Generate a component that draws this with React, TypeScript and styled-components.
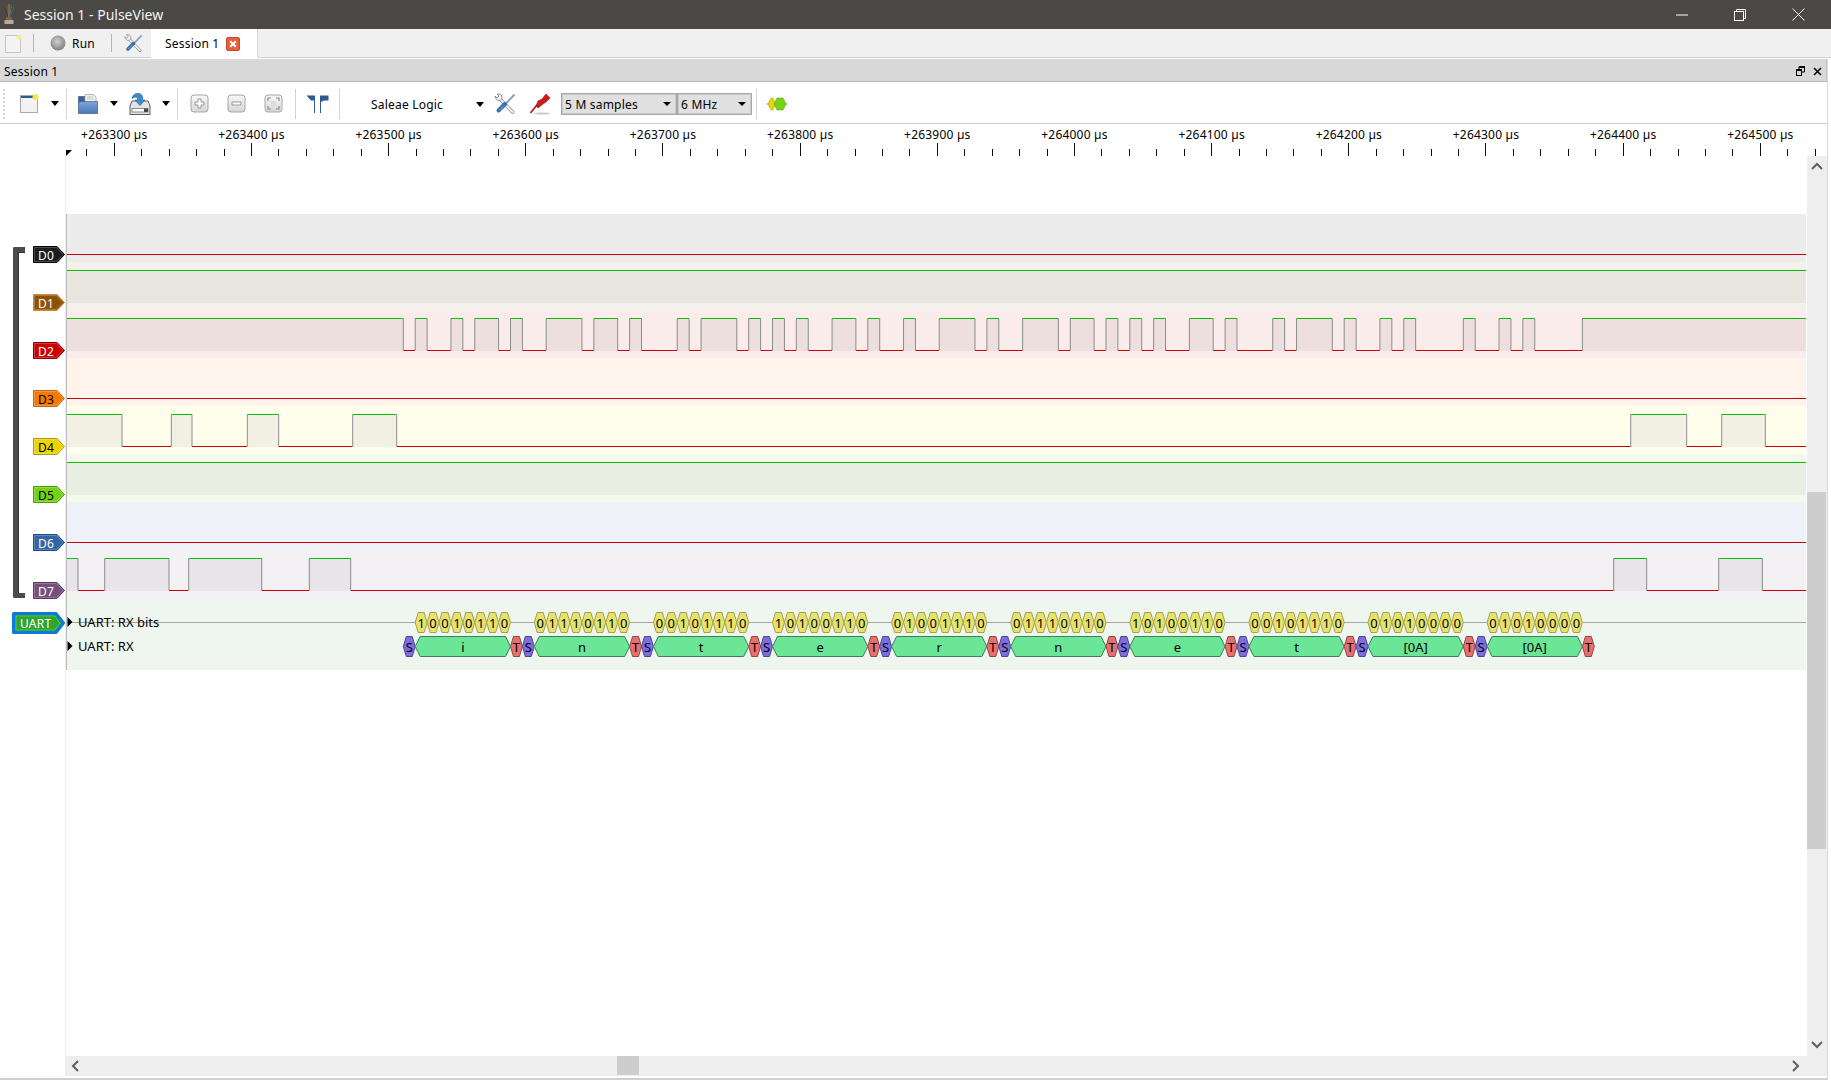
// App.tsx - PulseView session window

import styled, { createGlobalStyle } from "styled-components";

const GlobalStyle = createGlobalStyle`
  html, body {
    margin: 0;
    padding: 0;
    background: #ffffff;
    overflow: hidden;
  }
  body {
    font-family: "Noto Sans", "Liberation Sans", sans-serif;
    font-size: 12px;
    letter-spacing: 0.2px;
    color: #000000;
  }
`;

const Window = styled.div`
  width: 1831px;
  height: 1080px;
  display: flex;
  flex-direction: column;
`;

const TitleBar = styled.header`
  height: 29px;
  flex: none;
  display: flex;
  align-items: center;
  background: #4a4946;
  color: #f2f2f2;
  font-size: 14px;
  letter-spacing: 0;
  padding-left: 3px;
`;

const TitleText = styled.span`
  margin-left: 9px;
  flex: 1;
`;

const WinButton = styled.div`
  width: 58px;
  height: 29px;
  display: flex;
  align-items: center;
  justify-content: center;
`;

const WinControls = styled.div`
  display: flex;
  margin-right: 4px;
`;

const TabBar = styled.nav`
  height: 29px;
  flex: none;
  display: flex;
  align-items: center;
  background: #f0f0f0;
  border-bottom: 1px solid #d2d2d2;
  box-sizing: border-box;
`;

const TabIcon = styled.div<{ $w: number; $pl?: number; $pr?: number }>`
  width: ${(p) => p.$w}px;
  height: 100%;
  flex: none;
  box-sizing: border-box;
  padding: 0 ${(p) => p.$pr ?? 0}px 0 ${(p) => p.$pl ?? 0}px;
  display: flex;
  align-items: center;
  justify-content: center;
`;

const TabSep = styled.div`
  width: 1px;
  height: 18px;
  background: #b4b4b4;
  flex: none;
`;

const RunButton = styled.div`
  width: 77px;
  flex: none;
  display: flex;
  align-items: center;
  gap: 6px;
  padding-left: 16px;
  box-sizing: border-box;
`;

const Tab = styled.div`
  width: 107px;
  height: 29px;
  flex: none;
  margin-left: 1px;
  display: flex;
  align-items: center;
  gap: 7px;
  padding: 2px 0 0 14px;
  box-sizing: border-box;
  background: #ffffff;
  border-right: 1px solid #d8d8d8;
  border-bottom: 1px solid #ffffff;
`;

const Dock = styled.div`
  flex: 1;
  min-height: 0;
  display: flex;
  flex-direction: column;
  margin-top: 1px;
  margin-right: 3px;
  border-right: 1px solid #d8d8d8;
  border-bottom: 2px solid #d0d0d0;
`;

const DockTitle = styled.div`
  height: 23px;
  flex: none;
  box-sizing: border-box;
  display: flex;
  align-items: center;
  padding: 2px 0 0 4px;
  background: #d8d8d8;
  border-bottom: 1px solid #b8b8b8;
  border-right: 1px solid #c4c4c4;
`;

const DockLabel = styled.span`
  flex: 1;
`;

const DockControls = styled.div`
  display: flex;
  align-items: center;
  gap: 8px;
  margin-right: 4px;
`;

const Toolbar = styled.div`
  height: 42px;
  flex: none;
  box-sizing: border-box;
  display: flex;
  align-items: center;
  padding: 2px 0 0 3px;
  background: #ffffff;
  border-bottom: 1px solid #c8c8c8;
`;

const Grip = styled.div`
  width: 7px;
  height: 30px;
  flex: none;
  box-sizing: border-box;
  border-left: 2px dotted #cfcfcf;
`;

const ToolButton = styled.div<{ $w: number }>`
  width: ${(p) => p.$w}px;
  height: 30px;
  flex: none;
  display: flex;
  align-items: center;
  justify-content: center;
`;

const ToolSep = styled.div<{ $ml: number }>`
  width: 1px;
  height: 30px;
  flex: none;
  margin-left: ${(p) => p.$ml}px;
  background: #d4d4d4;
`;

const Arrow = styled.div`
  width: 0;
  height: 0;
  flex: none;
  border-left: 4.5px solid transparent;
  border-right: 4.5px solid transparent;
  border-top: 5px solid #000000;
`;

const DeviceSelect = styled.div`
  width: 146px;
  height: 30px;
  flex: none;
  box-sizing: border-box;
  display: flex;
  align-items: center;
  justify-content: space-between;
  padding: 2px 2px 0 31px;
`;

const ComboGroup = styled.div`
  display: flex;
  margin-left: 3px;
  flex: none;
`;

const Combo = styled.div<{ $w: number }>`
  width: ${(p) => p.$w}px;
  height: 22px;
  box-sizing: border-box;
  display: flex;
  align-items: center;
  justify-content: space-between;
  padding: 2px 5px 0 3px;
  background: #e0e0e0;
  border: 1px solid #a8a8a8;
  box-shadow: inset 0 0 0 1px #c8c8c8;
`;

const ComboArrow = styled(Arrow)`
  border-left-width: 4px;
  border-right-width: 4px;
  border-top-width: 4px;
  margin-top: -2px;
`;

const View = styled.div`
  flex: 1;
  min-height: 0;
  display: flex;
  flex-direction: column;
`;

const RulerBar = styled.div`
  height: 32px;
  flex: none;
  padding-left: 66px;
  background: #ffffff;

  svg {
    display: block;
  }
`;

const RulerLabel = styled.text`
  font-family: "Noto Sans", "Liberation Sans", sans-serif;
  font-size: 12px;
  letter-spacing: 0.2px;
  text-anchor: middle;
`;

const RowLabel = styled.text`
  font-family: "Noto Sans", "Liberation Sans", sans-serif;
  font-size: 13px;
  letter-spacing: 0;
`;

const AnnoLabel = styled.text`
  font-family: "Noto Sans", "Liberation Sans", sans-serif;
  font-size: 13px;
  letter-spacing: 0;
  text-anchor: middle;
`;

const Middle = styled.div`
  height: 900px;
  flex: none;
  display: flex;
`;

const Main = styled.div`
  flex: 1;
  margin-right: 1px;
  padding-top: 58px;
  box-sizing: border-box;
  background: linear-gradient(
    to right,
    transparent 65px,
    #eeeeee 65px,
    #eeeeee 66px,
    transparent 66px
  );
`;

const SignalGroup = styled.div`
  position: relative;
`;

const Bracket = styled.div`
  position: absolute;
  left: 13px;
  top: 33px;
  bottom: 0;
  width: 12px;
  box-sizing: border-box;
  border: 5px solid #4c4c4c;
  border-right: none;
  border-radius: 2px 0 0 2px;
  box-shadow: inset 1px 1px 0 #333333;
`;

const Row = styled.div<{ $h: number }>`
  height: ${(p) => p.$h}px;
  display: grid;
  grid-template-columns: 66px 1fr;
`;

const Head = styled.div<{ $pl: number; $pt: number }>`
  padding: ${(p) => p.$pt}px 0 0 ${(p) => p.$pl}px;
  box-sizing: border-box;
`;

const Trace = styled.div<{ $bg: string }>`
  background: ${(p) => p.$bg};
  border-left: 1px solid #bcbcbc;
  min-width: 0;

  svg {
    display: block;
  }
`;

const TagBox = styled.div<{ $w: number; $h: number; $color: string }>`
  position: relative;
  width: ${(p) => p.$w}px;
  height: ${(p) => p.$h}px;
  color: ${(p) => p.$color};

  svg {
    display: block;
  }
`;

const TagText = styled.span<{ $left: number }>`
  position: absolute;
  left: ${(p) => p.$left}px;
  top: 2px;
  bottom: 0;
  display: flex;
  align-items: center;
  line-height: 1;
`;

const VScroll = styled.div`
  width: 20px;
  flex: none;
  display: flex;
  flex-direction: column;
  background: #eeeeee;
`;

const ScrollEnd = styled.div<{ $size: number; $vertical?: boolean }>`
  flex: none;
  display: flex;
  align-items: center;
  justify-content: center;
  ${(p) =>
    p.$vertical ? `height: ${p.$size}px;` : `width: ${p.$size}px;`}
`;

const VTrack = styled.div`
  flex: 1;
`;

const VThumb = styled.div`
  width: 19px;
  height: 357px;
  margin-top: 316px;
  background: #cdcdcd;
`;

const HScroll = styled.div`
  height: 20px;
  flex: none;
  margin-left: 65px;
  padding-right: 21px;
  display: flex;
  background: #eeeeee;
`;

const HTrack = styled.div`
  flex: 1;
`;

const HThumb = styled.div`
  width: 22px;
  height: 19px;
  margin-left: 532px;
  background: #cdcdcd;
`;

// ---- signal data ----

const BIT_W = 11.91;
const FRAME_W = BIT_W * 10;
const UART_START = 403.3;
const CANVAS_L = 67;
const CANVAS_R = 1806;
const CANVAS_W = CANVAS_R - CANVAS_L;

const BYTES = [
  { code: 0x69, label: "i" },
  { code: 0x6e, label: "n" },
  { code: 0x74, label: "t" },
  { code: 0x65, label: "e" },
  { code: 0x72, label: "r" },
  { code: 0x6e, label: "n" },
  { code: 0x65, label: "e" },
  { code: 0x74, label: "t" },
  { code: 0x0a, label: "[0A]" },
  { code: 0x0a, label: "[0A]" },
];

const bitsOf = (code: number) =>
  Array.from({ length: 8 }, (_, i) => (code >> i) & 1);

const uartEdges = () => {
  const edges: number[] = [];
  let level = 1;
  BYTES.forEach((b, f) => {
    const x0 = UART_START + f * FRAME_W;
    const levels = [0, ...bitsOf(b.code), 1];
    levels.forEach((l, i) => {
      if (l !== level) {
        edges.push(x0 + i * BIT_W);
        level = l;
      }
    });
  });
  return edges;
};

type Channel = {
  name: string;
  fill: string;
  dark: string;
  text: string;
  bg: string;
  shade: string;
  start: 0 | 1;
  edges: number[];
};

const CHANNELS: Channel[] = [
  { name: "D0", fill: "#1a1c1e", dark: "#000000", text: "#ffffff", bg: "#ececec", shade: "#e0e0e0", start: 0, edges: [] },
  { name: "D1", fill: "#8f5202", dark: "#c98a3a", text: "#ffffff", bg: "#f4f1ed", shade: "#e9e5df", start: 1, edges: [] },
  { name: "D2", fill: "#cc0000", dark: "#8a0000", text: "#ffffff", bg: "#fbecec", shade: "#eedfdf", start: 1, edges: uartEdges() },
  { name: "D3", fill: "#f57900", dark: "#b86a20", text: "#000000", bg: "#fef4eb", shade: "#f0e7df", start: 0, edges: [] },
  { name: "D4", fill: "#edd400", dark: "#a89a20", text: "#000000", bg: "#fffeec", shade: "#f1f0e2", start: 1, edges: [122, 171.3, 192, 247.3, 278.7, 352.7, 396.7, 1630.7, 1686.7, 1721.7, 1765.3] },
  { name: "D5", fill: "#73d216", dark: "#4e9a06", text: "#000000", bg: "#f3faeb", shade: "#e8eee2", start: 1, edges: [] },
  { name: "D6", fill: "#3465a4", dark: "#204a87", text: "#ffffff", bg: "#eff2f8", shade: "#e4e7ee", start: 0, edges: [] },
  { name: "D7", fill: "#75507b", dark: "#5c3566", text: "#ffffff", bg: "#f3f1f4", shade: "#e7e5e8", start: 1, edges: [78, 104.7, 169, 188.7, 261.7, 309.3, 350.7, 1613.7, 1646.7, 1718.7, 1762.3] },
];

const TICK_BASE = 114.3;
const TICK_STEP = 137.17;
const LABELS = Array.from({ length: 13 }, (_, i) => i);

// ---- drawings ----

function Ruler() {
  const ticks: { x: number; major: boolean }[] = [];
  for (let i = -1; i < 65; i++) {
    ticks.push({ x: TICK_BASE + (i * TICK_STEP) / 5, major: i % 5 === 0 });
  }
  return (
    <svg width={1761} height={32} viewBox="66 124 1761 32">
      {LABELS.map((i) => (
        <RulerLabel key={i} x={TICK_BASE + i * TICK_STEP} y={139}>
          {`+${263300 + i * 100} µs`}
        </RulerLabel>
      ))}
      {ticks.map((t) => (
        <rect
          key={t.x}
          x={Math.floor(t.x)}
          y={t.major ? 143 : 149}
          width={1}
          height={t.major ? 13 : 7}
          fill="#111"
        />
      ))}
      <polygon points="66,150 72,150 66,156" fill="#000" />
    </svg>
  );
}

function SignalTrace({ ch }: { ch: Channel }) {
  const stops = [CANVAS_L, ...ch.edges, CANVAS_R];
  return (
    <svg width={CANVAS_W} height={48} viewBox={`${CANVAS_L} 0 ${CANVAS_W} 48`}>
      {stops.slice(0, -1).map((a, i) => {
        const b = stops[i + 1];
        const high = (ch.start + i) % 2 === 1;
        return high ? (
          <g key={a}>
            <rect x={a} y={8} width={b - a} height={33} fill={ch.shade} />
            <rect x={a} y={8} width={b - a} height={1} fill="#00c000" />
          </g>
        ) : (
          <rect key={a} x={a} y={40} width={b - a} height={1} fill="#cc0000" />
        );
      })}
      {ch.edges.map((x) => (
        <rect key={x} x={x - 0.5} y={8.5} width={1} height={32} fill="#8c8c8c" />
      ))}
    </svg>
  );
}

function hex(x0: number, x1: number, yc: number, tip: number, half = 10) {
  return [
    [x0, yc],
    [x0 + tip, yc - half],
    [x1 - tip, yc - half],
    [x1, yc],
    [x1 - tip, yc + half],
    [x0 + tip, yc + half],
  ]
    .map((p) => p.join(","))
    .join(" ");
}

function Anno({
  x0,
  x1,
  yc,
  fill,
  stroke,
  label,
  tip = 3,
}: {
  x0: number;
  x1: number;
  yc: number;
  fill: string;
  stroke: string;
  label: string;
  tip?: number;
}) {
  return (
    <g>
      <polygon points={hex(x0, x1, yc, tip)} fill={fill} stroke={stroke} strokeWidth={1} />
      <AnnoLabel x={(x0 + x1) / 2} y={yc + 5}>
        {label}
      </AnnoLabel>
    </g>
  );
}

function UartTrace() {
  const BITS_Y = 24.5;
  const DATA_Y = 48.5;
  return (
    <svg width={CANVAS_W} height={72} viewBox={`${CANVAS_L} 0 ${CANVAS_W} 72`}>
      <rect x={CANVAS_L} y={24} width={CANVAS_W} height={1} fill="#a4a4a0" />
      <polygon points="67.5,19 72.5,24 67.5,29" fill="#000" />
      <polygon points="67.5,43 72.5,48 67.5,53" fill="#000" />
      <RowLabel x={78} y={29}>
        UART: RX bits
      </RowLabel>
      <RowLabel x={78} y={53}>
        UART: RX
      </RowLabel>
      {BYTES.map((b, f) => {
        const x0 = UART_START + f * FRAME_W;
        const dataStart = x0 + BIT_W;
        return (
          <g key={f}>
            {bitsOf(b.code).map((bit, i) => (
              <Anno
                key={i}
                x0={dataStart + i * BIT_W}
                x1={dataStart + (i + 1) * BIT_W}
                yc={BITS_Y}
                fill="#e6e36c"
                stroke="#a3a04c"
                label={String(bit)}
              />
            ))}
            <Anno x0={x0} x1={dataStart} yc={DATA_Y} fill="#7d6de0" stroke="#4c4690" label="S" />
            <Anno
              x0={dataStart}
              x1={dataStart + 8 * BIT_W}
              yc={DATA_Y}
              fill="#6be596"
              stroke="#3f7f53"
              label={b.label}
              tip={5}
            />
            <Anno
              x0={dataStart + 8 * BIT_W}
              x1={dataStart + 9 * BIT_W}
              yc={DATA_Y}
              fill="#e96f6f"
              stroke="#8f4646"
              label="T"
            />
          </g>
        );
      })}
    </svg>
  );
}

function ChannelTag({ ch }: { ch: Channel }) {
  return (
    <TagBox $w={32} $h={17} $color={ch.text}>
      <svg width={32} height={17} viewBox="0 0 32 17">
        <polygon points="0.5,0.5 24,0.5 31.5,8.5 24,16.5 0.5,16.5" fill={ch.fill} stroke={ch.dark} />
        <polygon
          points="1.5,1.5 23.5,1.5 30,8.5 23.5,15.5 1.5,15.5"
          fill="none"
          stroke="#ffffff"
          strokeOpacity={0.22}
        />
      </svg>
      <TagText $left={5}>{ch.name}</TagText>
    </TagBox>
  );
}

function UartTag() {
  return (
    <TagBox $w={53} $h={22} $color="#ffffff">
      <svg width={53} height={22} viewBox="0 0 53 22">
        <polygon
          points="1.5,1.5 44,1.5 51.5,11 44,20.5 1.5,20.5"
          fill="#2ea52e"
          stroke="#0c78e0"
          strokeWidth={3}
          strokeLinejoin="round"
        />
        <polygon points="4,4 42.5,4 48,11 42.5,18 4,18" fill="none" stroke="#6fcf6f" strokeOpacity={0.6} />
      </svg>
      <TagText $left={8}>UART</TagText>
    </TagBox>
  );
}

function PulseLogo() {
  return (
    <svg width={12} height={21} viewBox="0 0 12 21">
      <path d="M6 14 L1 3" stroke="#3a3a3a" strokeWidth={1} />
      <path d="M6 14 L3.5 1" stroke="#a33c3c" strokeWidth={1} />
      <path d="M6 14 L6 0" stroke="#b08a30" strokeWidth={1} />
      <path d="M6 14 L8.5 1" stroke="#3f8a4a" strokeWidth={1} />
      <path d="M6 14 L11 3" stroke="#4a58b0" strokeWidth={1} />
      <rect x={3} y={13} width={6} height={3} fill="#75604a" />
      <rect x={1.5} y={16} width={9} height={4} fill="#b7ab98" />
    </svg>
  );
}

function NewIcon({ dim }: { dim?: boolean }) {
  return (
    <svg width={19} height={19} viewBox="0 0 19 19">
      <rect
        x={0.5}
        y={1.5}
        width={dim ? 15 : 17}
        height={17}
        fill={dim ? "#f4f4f4" : "#f2f2f2"}
        stroke={dim ? "#c4c4c4" : "#a8a8a8"}
      />
      {!dim && <rect x={1} y={2} width={16} height={2} fill="#2f5a98" />}
      <circle cx={dim ? 14 : 15.5} cy={3} r={dim ? 2.5 : 3} fill={dim ? "#f2ee90" : "#f3e93a"} />
    </svg>
  );
}

function FolderIcon() {
  return (
    <svg width={20} height={20} viewBox="0 0 20 20">
      <defs>
        <linearGradient id="folder-front" x1="0" y1="0" x2="0" y2="1">
          <stop offset="0" stopColor="#7ea6d8" />
          <stop offset="1" stopColor="#4a78b4" />
        </linearGradient>
      </defs>
      <path d="M0.5 2.5 H7 L8 4.5 H17 V10 H0.5 Z" fill="#3f6395" stroke="#3a5a88" strokeWidth={0.7} />
      <path d="M7 0.5 H15 L18 3 V10 H7 Z" fill="#f2f2f2" stroke="#9a9a9a" strokeWidth={0.7} />
      <path d="M9 3 H15 M9 5 H16" stroke="#b8b8b8" strokeWidth={0.8} />
      <path d="M2 7.5 H19.5 V19.5 H0.5 V9 Z" fill="url(#folder-front)" stroke="#3d5f8a" strokeWidth={0.7} />
    </svg>
  );
}

function SaveIcon() {
  return (
    <svg width={22} height={22} viewBox="0 0 22 22">
      <path d="M1 13 L3 8 H19 L21 13 V21.5 H1 Z" fill="#e4e4e4" stroke="#5c5c5c" />
      <rect x={3} y={15.5} width={16} height={3.5} fill="#fafafa" stroke="#777777" strokeWidth={0.8} />
      <rect x={15} y={15.5} width={4} height={3.5} fill="#4a4a4a" />
      <path d="M3 5.5 Q4 0.5 9 0.5 Q13.5 0.5 13.5 5 V7 H16 L11 12.5 L6 7 H8.5 V5.5 Q8.5 4 7 4 Q5 4 3 5.5 Z" fill="#3b8ccc" stroke="#23689e" strokeWidth={0.7} />
    </svg>
  );
}

const ZOOM_GLYPH = {
  in: "M8 5 H11 V8 H14 V11 H11 V14 H8 V11 H5 V8 H8 Z",
  out: "M5 8 H14 V11 H5 Z",
  fit: "M4 7 V4 H7 M12 4 H15 V7 M15 12 V15 H12 M7 15 H4 V12",
};

function ZoomIcon({ kind }: { kind: "in" | "out" | "fit" }) {
  return (
    <svg width={19} height={19} viewBox="0 0 19 19">
      <defs>
        <linearGradient id={`zb-${kind}`} x1="0" y1="0" x2="0" y2="1">
          <stop offset="0" stopColor="#f8f8f8" />
          <stop offset="1" stopColor="#d6d6d6" />
        </linearGradient>
      </defs>
      <rect x={1} y={1} width={17} height={17} rx={3} fill={`url(#zb-${kind})`} stroke="#a6a6a6" />
      {kind === "fit" ? (
        <>
          <path d={ZOOM_GLYPH.fit} fill="none" stroke="#8a8a8a" strokeWidth={1.2} />
          <rect x={7} y={7} width={5} height={5} fill="#dcdcdc" />
        </>
      ) : (
        <path d={ZOOM_GLYPH[kind]} fill="#ffffff" stroke="#8e8e8e" strokeWidth={0.9} />
      )}
    </svg>
  );
}

function CursorsIcon() {
  return (
    <svg width={23} height={18} viewBox="0 0 23 18">
      <path d="M0.5 0.5 H9 V18 H8 V5.5 H5 Z" fill="#2e5b98" />
      <path d="M14 0.5 H22.5 V5.5 H18 L15 7 V18 H14 Z" fill="#2e5b98" />
    </svg>
  );
}

function ToolsIcon({ size }: { size: number }) {
  return (
    <svg width={size} height={size} viewBox="0 0 22 22">
      <path d="M5 5 L18.5 19" stroke="#8a8a8a" strokeWidth={3.4} strokeLinecap="round" />
      <path d="M5 5 L18.5 19" stroke="#f4f4f4" strokeWidth={2} strokeLinecap="round" />
      <path d="M1 3 L3 5 L5 3 L3 1 Q7 0 8 3 Q8.5 6 6 7.5 Q2 8 1 3 Z" fill="#f4f4f4" stroke="#8a8a8a" strokeWidth={0.9} />
      <path d="M20.5 1.5 L11 11.5" stroke="#8fa0b4" strokeWidth={2} />
      <path d="M11 11 L4.5 17.5" stroke="#3a6cae" strokeWidth={4} strokeLinecap="round" />
      <path d="M10 12.5 L5 17.5" stroke="#8ab0e0" strokeWidth={0.9} />
    </svg>
  );
}

function ProbeIcon() {
  return (
    <svg width={22} height={22} viewBox="0 0 22 22">
      <ellipse cx={12} cy={20.5} rx={8} ry={1} fill="#c8c8c8" />
      <path d="M0.5 20 L7 12" stroke="#b01818" strokeWidth={1.6} />
      <path d="M6 13 L8 8 L12 6 L16 1 L20 5 L16 9 L13 11 L8 15 Z" fill="#cc1c1c" stroke="#9c1010" strokeWidth={0.6} />
    </svg>
  );
}

function DecoderIcon() {
  return (
    <svg width={22} height={14} viewBox="0 0 22 14">
      <rect x={0} y={6.5} width={22} height={1} fill="#a8a8a0" />
      <polygon points="2,7 5,1 7,1 9.5,7 7,13 5,13" fill="#ecd40a" stroke="#b4a420" strokeWidth={0.6} />
      <polygon points="8,7 11,1 17,1 20,7 17,13 11,13" fill="#74d216" stroke="#5aa810" strokeWidth={0.6} />
    </svg>
  );
}

function Chevron({ dir }: { dir: "up" | "down" | "left" | "right" }) {
  const d = {
    up: "M1 7 L6 2 L11 7",
    down: "M1 2 L6 7 L11 2",
    left: "M7 1 L2 6 L7 11",
    right: "M2 1 L7 6 L2 11",
  }[dir];
  const vertical = dir === "up" || dir === "down";
  return (
    <svg width={vertical ? 12 : 9} height={vertical ? 9 : 12} viewBox={vertical ? "0 0 12 9" : "0 0 9 12"}>
      <path d={d} fill="none" stroke="#5f5f5f" strokeWidth={2} />
    </svg>
  );
}

export default function App() {
  return (
    <Window>
      <GlobalStyle />
      <TitleBar>
        <PulseLogo />
        <TitleText>Session 1 - PulseView</TitleText>
        <WinControls>
          <WinButton>
            <svg width={12} height={2}>
              <rect width={12} height={1} y={0.5} fill="#ffffff" />
            </svg>
          </WinButton>
          <WinButton>
            <svg width={12} height={12} viewBox="0 0 12 12">
              <rect x={0.5} y={2.5} width={9} height={9} fill="none" stroke="#fff" />
              <path d="M2.5 2.5 V0.5 H11.5 V9.5 H9.5" fill="none" stroke="#fff" />
            </svg>
          </WinButton>
          <WinButton>
            <svg width={13} height={13} viewBox="0 0 13 13">
              <path d="M0.5 0.5 L12.5 12.5 M12.5 0.5 L0.5 12.5" stroke="#fff" strokeWidth={1} />
            </svg>
          </WinButton>
        </WinControls>
      </TitleBar>

      <TabBar>
        <TabIcon $w={33} $pr={4}>
          <NewIcon dim />
        </TabIcon>
        <TabSep />
        <RunButton>
          <svg width={16} height={16} viewBox="0 0 16 16">
            <defs>
              <radialGradient id="run" cx="0.45" cy="0.4" r="0.6">
                <stop offset="0" stopColor="#d0d0d0" />
                <stop offset="1" stopColor="#808080" />
              </radialGradient>
            </defs>
            <circle cx={8} cy={8} r={7.5} fill="url(#run)" />
          </svg>
          <span>Run</span>
        </RunButton>
        <TabSep />
        <TabIcon $w={38} $pl={5}>
          <ToolsIcon size={19} />
        </TabIcon>
        <Tab>
          <span>Session 1</span>
          <svg width={14} height={14} viewBox="0 0 14 14">
            <rect x={0.5} y={0.5} width={13} height={13} rx={1.5} fill="#e5603c" stroke="#c44a2a" />
            <path d="M4.2 4.2 L9.8 9.8 M9.8 4.2 L4.2 9.8" stroke="#fff" strokeWidth={2} />
          </svg>
        </Tab>
      </TabBar>

      <Dock>
        <DockTitle>
          <DockLabel>Session 1</DockLabel>
          <DockControls>
            <svg width={9} height={10} viewBox="0 0 9 10">
              <rect x={0.5} y={3.5} width={5} height={6} fill="none" stroke="#000" />
              <path d="M3 3 V0.5 H8.5 V6 H6" fill="none" stroke="#000" />
              <rect x={3} y={0} width={6} height={2} fill="#000" />
              <rect x={0} y={3} width={6} height={2} fill="#000" />
            </svg>
            <svg width={9} height={9} viewBox="0 0 9 9">
              <path d="M1 1 L8 8 M8 1 L1 8" stroke="#000" strokeWidth={1.6} />
            </svg>
          </DockControls>
        </DockTitle>

        <Toolbar>
          <Grip />
          <ToolButton $w={38}>
            <NewIcon />
          </ToolButton>
          <ToolButton $w={14}>
            <Arrow />
          </ToolButton>
          <ToolSep $ml={4} />
          <ToolButton $w={42}>
            <FolderIcon />
          </ToolButton>
          <ToolButton $w={10}>
            <Arrow />
          </ToolButton>
          <ToolButton $w={42}>
            <SaveIcon />
          </ToolButton>
          <ToolButton $w={10}>
            <Arrow />
          </ToolButton>
          <ToolSep $ml={6} />
          <ToolButton $w={42}>
            <ZoomIcon kind="in" />
          </ToolButton>
          <ToolButton $w={32}>
            <ZoomIcon kind="out" />
          </ToolButton>
          <ToolButton $w={42}>
            <ZoomIcon kind="fit" />
          </ToolButton>
          <ToolSep $ml={1} />
          <ToolButton $w={42}>
            <CursorsIcon />
          </ToolButton>
          <ToolSep $ml={1} />
          <DeviceSelect>
            <span>Saleae Logic</span>
            <Arrow />
          </DeviceSelect>
          <ToolButton $w={38}>
            <ToolsIcon size={22} />
          </ToolButton>
          <ToolButton $w={34}>
            <ProbeIcon />
          </ToolButton>
          <ComboGroup>
            <Combo $w={116}>
              <span>5 M samples</span>
              <ComboArrow />
            </Combo>
            <Combo $w={75}>
              <span>6 MHz</span>
              <ComboArrow />
            </Combo>
          </ComboGroup>
          <ToolSep $ml={4} />
          <ToolButton $w={40}>
            <DecoderIcon />
          </ToolButton>
        </Toolbar>

        <View>
          <RulerBar>
            <Ruler />
          </RulerBar>
          <Middle>
            <Main>
              <SignalGroup>
                <Bracket />
                {CHANNELS.map((ch) => (
                  <Row key={ch.name} $h={48}>
                    <Head $pl={33} $pt={32}>
                      <ChannelTag ch={ch} />
                    </Head>
                    <Trace $bg={ch.bg}>
                      <SignalTrace ch={ch} />
                    </Trace>
                  </Row>
                ))}
              </SignalGroup>
              <Row $h={72}>
                <Head $pl={12} $pt={14}>
                  <UartTag />
                </Head>
                <Trace $bg="#eef6ef">
                  <UartTrace />
                </Trace>
              </Row>
            </Main>
            <VScroll>
              <ScrollEnd $vertical $size={20}>
                <Chevron dir="up" />
              </ScrollEnd>
              <VTrack>
                <VThumb />
              </VTrack>
              <ScrollEnd $vertical $size={24}>
                <Chevron dir="down" />
              </ScrollEnd>
            </VScroll>
          </Middle>
          <HScroll>
            <ScrollEnd $size={20}>
              <Chevron dir="left" />
            </ScrollEnd>
            <HTrack>
              <HThumb />
            </HTrack>
            <ScrollEnd $size={22}>
              <Chevron dir="right" />
            </ScrollEnd>
          </HScroll>
        </View>
      </Dock>
    </Window>
  );
}
